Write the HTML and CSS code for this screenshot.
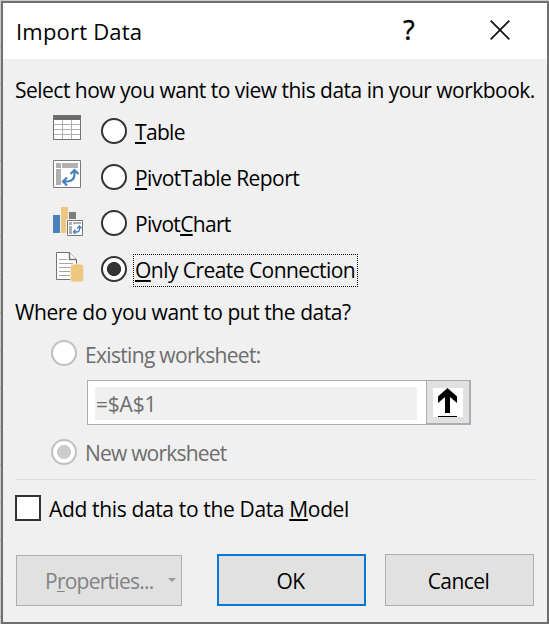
FILE: index.html
```html
<!DOCTYPE html>
<html lang="en">
<head>
<meta charset="utf-8">
<title>Import Data</title>
<link rel="stylesheet" href="styles.css">
</head>
<body>
<main class="dialog">
  <header class="titlebar">
    <h1 class="title">Import Data</h1>
    <span class="help">?</span>
    <svg class="close" width="20" height="20" viewBox="0 0 20 20"><path d="M.7.7 19.3 19.3M19.3.7.7 19.3" fill="none" stroke="#111" stroke-width="1.7"/></svg>
  </header>
  <section class="content">
    <p class="prompt t-select">Select how you want to view this data in your workbook.</p>
    <div class="options">
      <div class="option">
        <svg class="icon" width="32" height="32" viewBox="0 0 32 32" shape-rendering="crispEdges"><path fill="#fff" d="M1 2h28v25H1z"/><path fill="#6b6b6b" d="M1 2h28v5H1z"/><path d="M2 11.5h26M2 16.500h26M2 21.500h26M10.500 7v19M19.500 7v19" stroke="#b0b0b0" fill="none"/><path d="M1.500 2.500h27v24h-27z" fill="none" stroke="#727272"/></svg>
        <i class="radio"></i><span class="label t-table"><u>T</u>able</span>
      </div>
      <div class="option">
        <svg class="icon" width="32" height="32" viewBox="0 0 32 32"><path fill="#fff" stroke="#7a7a7a" d="M1.500 1.500h27v27h-27z"/><path fill="#b0b0b0" d="M4 4h5v5H4zM10 4h16v5H10zM4 10h5v16H4z"/><path d="M11.500 22.500h4Q22.500 22 22.500 15v-3M18.500 15l4-4 4 4M15 18.500l-4 4 4 4" fill="none" stroke="#4a80bb" stroke-width="2.200"/></svg>
        <i class="radio"></i><span class="label t-pivot"><u>P</u>ivotTable Report</span>
      </div>
      <div class="option">
        <svg class="icon" width="32" height="32" viewBox="0 0 32 32"><path fill="#4a80bb" d="M1 10h7v18H1z"/><path fill="#edc77d" d="M9 2h7v26H9z"/><path fill="#7c7c7c" d="M17 7h7v8h-7z"/><path fill="#fff" stroke="#f0f0f0" stroke-width="2" d="M15 15h16v16H15z"/><path fill="#fff" stroke="#777" d="M15.500 15.500h15v15h-15z"/><path fill="#b0b0b0" d="M17 17h3v3h-3zM21 17h8v2h-8zM17 21h3v8h-3z"/><path d="M21.500 27h3q3 0 3-3v-3M25 23.500l2.500-2.500 2 2.500M23.500 24.500 21.500 27l2 2" fill="none" stroke="#4a80bb" stroke-width="1.300"/></svg>
        <i class="radio"></i><span class="label t-chart">Pivot<u>C</u>hart</span>
      </div>
      <div class="option">
        <svg class="icon" width="32" height="32" viewBox="0 0 32 32"><path fill="#fff" stroke="#737373" d="M4.500 1.500h13l7 7v20h-20z"/><path d="M17.500 1.500v7h7" fill="#fff" stroke="#737373" stroke-width="1.400"/><path d="M7 8.500h8M7 12.500h14M7 16.500h14M7 20.500h11M7 24.500h11" stroke="#a6a6a6" fill="none"/><path d="M18.500 15q0-2 6.500-2t6.500 2v14q0 2-6.500 2t-6.500-2z" fill="#edc77d" stroke="#f0f0f0" stroke-width=".5"/></svg>
        <i class="radio checked"></i><span class="label focused t-only"><u>O</u>nly Create Connection</span>
      </div>
    </div>
    <p class="prompt t-where">Where do you want to put the data?</p>
    <div class="destination">
      <div class="dest"><i class="radio off"></i><span class="label t-exist">Existing worksheet:</span></div>
      <div class="reference">
        <div class="field"><span class="value">=$A$1</span></div>
        <div class="picker"><svg width="30" height="29" viewBox="0 0 30 29"><path fill="#fff" d="M0 0h30v29H0z"/><path d="M14.500 0 24 8.500V15l-7-6v16h-5V9l-7 6V8.500zM5 28h19v1H5z"/></svg></div>
      </div>
      <div class="dest"><i class="radio off checked"></i><span class="label t-new">New worksheet</span></div>
    </div>
    <div class="model"><i class="checkbox"></i><span class="label t-add">Add this data to the Data <u>M</u>odel</span></div>
    <footer class="actions">
      <div class="button disabled"><span class="t-prop">P<u>r</u>operties...</span><i class="caret"></i></div>
      <div class="button primary"><span class="t-ok">OK</span></div>
      <div class="button"><span class="t-cancel">Cancel</span></div>
    </footer>
  </section>
</main>
</body>
</html>
```
FILE: styles.css
```css
* { box-sizing: border-box; }
body {
  margin: 0;
  padding: 1px 0 0 1px;
  width: 549px;
  height: 624px;
  overflow: hidden;
  background: repeating-linear-gradient(#c9ccc9 0 37px, #a9aba9 37px 38px) 0 9px;
  font: 21px/30px "Open Sans", "Noto Sans", sans-serif;
  letter-spacing: -.55px;
  color: #000;
}
h1, p { margin: 0; font-size: inherit; font-weight: 400; }
span, p, h1 { white-space: nowrap; }
u {
  text-decoration: underline 2px;
  text-underline-offset: 2px;
  text-decoration-skip-ink: none;
}
.dialog { width: 548px; height: 623px; border: 2px solid #6f7170; background: #f0f0f0; }
.titlebar { display: flex; height: 56px; padding: 13px 37px 0 13px; background: #fff; }
.title { flex: 1; font-size: 22px; letter-spacing: .2px; }
.help { width: 14px; margin-right: 73px; font: 400 27px/28px "Noto Sans", sans-serif; -webkit-text-stroke: .3px #000; }
.close { margin-top: 4px; }
.content { padding: 16px 12px 0; }
.prompt { height: 30px; }
.options { padding: 8px 0 0 37px; }
.option { display: flex; height: 46px; }
.icon { flex: none; margin-right: 17px; }
.radio {
  flex: none;
  display: block;
  width: 26px;
  height: 26px;
  margin-top: 5px;
  border: 2px solid #333;
  border-radius: 50%;
  background: #fff;
}
.radio.checked { background: radial-gradient(circle, #333 6.700px, #fff 7.400px); }
.radio.off { border-color: #c0c0c0; margin-top: 1px; }
.radio.off.checked { background: radial-gradient(circle, #ccc 6.700px, #fff 7.400px); }
.option .label { height: 33px; margin: 3px 0 0 6px; padding: 0 1px; border: 1px solid transparent; }
.option .focused { width: 225px; border: 1px dotted #000; }
.t-select { letter-spacing: -.51px; }
.t-table, .t-chart { letter-spacing: -.68px; }
.t-where { letter-spacing: -.44px; }
.t-exist { margin-top: 1px; letter-spacing: -.68px; }
.t-new { letter-spacing: -.8px; }
.t-add { margin-top: -1px; letter-spacing: -.35px; }
.t-prop { letter-spacing: -.75px; }
.t-ok, .t-cancel { margin-right: 2px; }
.destination { padding: 12px 0 0 36px; color: #6d6d6d; }
.dest { display: flex; height: 28px; }
.dest .label { margin-left: 8px; }
.reference { display: flex; height: 45px; margin: 13px 0 13px 36px; }
.field { width: 339px; padding: 6px 9px 4px 7px; border: 1px solid #abadb3; border-right: 0; background: #fff; }
.value { display: block; height: 33px; padding: 2px 0 0 1px; background: #f0f0f0; letter-spacing: -.2px; }
.picker { width: 45px; padding: 7px 6px; border: solid #abadb3; border-width: 1px 2px 2px 1px; background: #e1e1e1; }
.picker svg { display: block; }
.model { display: flex; height: 75px; margin-top: 13px; padding-top: 15px; border-top: 1px solid #dcdcdc; }
.checkbox { width: 26px; height: 26px; border: 2px solid #333; background: #fff; }
.model .label { margin-left: 8px; }
.actions { display: flex; justify-content: flex-end; padding-right: 1px; }
.button {
  display: flex;
  justify-content: center;
  width: 149px;
  height: 52px;
  margin-left: 19px;
  padding-top: 11px;
  border: 1px solid #adadad;
  background: #e1e1e1;
}
.primary { border: 2px solid #0078d7; padding-top: 10px; }
.disabled { width: 166px; height: 51px; margin: 1px 16px 0 0; padding-top: 10px; justify-content: flex-start; padding-left: 28px; color: #838383; }
.disabled u { text-decoration-thickness: 1px; }
.caret { margin: 12px 0 0 15px; height: 4px; border: solid transparent; border-width: 4px 4px 0; border-top-color: #999; }
```
